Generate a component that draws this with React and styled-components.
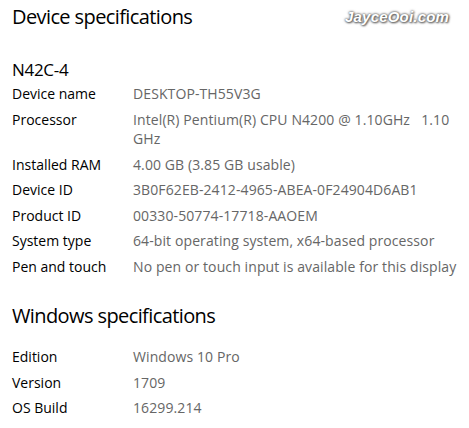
import React from 'react'
import styled, { createGlobalStyle } from 'styled-components'

const GlobalStyle = createGlobalStyle`
  body {
    margin: 0;
    background: #fff;
    font-family: "Open Sans", "Noto Sans", sans-serif;
  }
`

const Page = styled.div`
  position: relative;
  width: 469px;
  height: 428px;
  padding: 0 12px;
  box-sizing: border-box;
  background: #fff;
  color: #000;
  overflow: hidden;
`

const Watermark = styled.div`
  position: absolute;
  top: 8px;
  left: 345px;
  font-family: "Liberation Sans", Arial, sans-serif;
  font-weight: bold;
  font-style: italic;
  font-size: 15px;
  color: #fff;
  letter-spacing: 0.2px;
  text-shadow: 0 0 2px #555, 0 0 3px #777, 1px 1px 2px #666;
`

const Heading = styled.h2`
  margin: ${props => props.top}px 0 0 0;
  font-size: 20px;
  font-weight: 400;
  line-height: 28px;
  letter-spacing: -0.6px;
`

const DeviceTitle = styled.div`
  margin-top: 28px;
  font-size: 17px;
  line-height: 22px;
  letter-spacing: -0.3px;
`

const SpecList = styled.div`
  display: flex;
  flex-direction: column;
  gap: 6px;
  margin-top: ${props => props.top}px;
`

const SpecRow = styled.div`
  display: grid;
  grid-template-columns: 121px 1fr;
  font-size: 14px;
  line-height: 19.5px;
`

const Label = styled.div`
  color: #000;
`

const Value = styled.div`
  color: #666;
  white-space: pre-wrap;
  letter-spacing: 0.1px;
  max-width: 340px;
`

const device = [
  ['Device name', 'DESKTOP-TH55V3G'],
  ['Processor', 'Intel(R) Pentium(R) CPU N4200 @ 1.10GHz   1.10 GHz'],
  ['Installed RAM', '4.00 GB (3.85 GB usable)'],
  ['Device ID', '3B0F62EB-2412-4965-ABEA-0F24904D6AB1'],
  ['Product ID', '00330-50774-17718-AAOEM'],
  ['System type', '64-bit operating system, x64-based processor'],
  ['Pen and touch', 'No pen or touch input is available for this display'],
]

const windows = [
  ['Edition', 'Windows 10 Pro'],
  ['Version', '1709'],
  ['OS Build', '16299.214'],
]

const Specs = ({ rows, top }) => (
  <SpecList top={top}>
    {rows.map(([label, value]) => (
      <SpecRow key={label}>
        <Label>{label}</Label>
        <Value>{value}</Value>
      </SpecRow>
    ))}
  </SpecList>
)

export default function App() {
  return (
    <Page>
      <GlobalStyle />
      <Watermark>JayceOoi.com</Watermark>
      <Heading top={3}>Device specifications</Heading>
      <DeviceTitle>N42C-4</DeviceTitle>
      <Specs rows={device} top={3} />
      <Heading top={26}>Windows specifications</Heading>
      <Specs rows={windows} top={17} />
    </Page>
  )
}
